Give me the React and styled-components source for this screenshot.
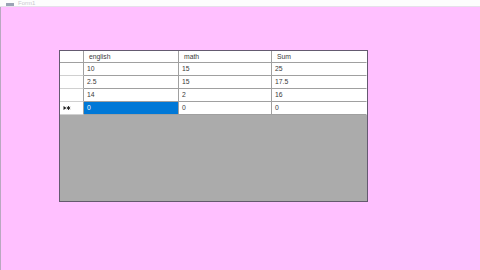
import React from "react";
import styled, { createGlobalStyle } from "styled-components";

const Global = createGlobalStyle`
  html, body { margin: 0; padding: 0; }
  body { width: 480px; height: 270px; overflow: hidden; background: #ffc0ff; font-family: "Liberation Sans", Arial, sans-serif; }
  #root { width: 480px; height: 270px; }
`;

const Window = styled.div`
  display: flex;
  flex-direction: column;
  width: 480px;
  height: 270px;
`;

const TitleBar = styled.div`
  height: 6px;
  flex: none;
  background: #fdfdfd;
  border-bottom: 1px solid #e6e0ea;
  display: flex;
  align-items: flex-end;
  padding-left: 6px;
  gap: 4px;
  overflow: hidden;
`;

const TitleIcon = styled.div`
  width: 8px;
  height: 3px;
  background: #9aa3b5;
`;

const TitleText = styled.div`
  font-size: 6px;
  line-height: 6px;
  color: #c8c8d0;
`;

const Client = styled.div`
  flex: 1;
  background: #ffc0ff;
  border-left: 1px solid #b9a8c0;
  padding: 43px 0 0 58px;
`;

const Grid = styled.div`
  width: 307px;
  height: 150px;
  border: 1px solid #645a70;
  background: #ababab;
  display: flex;
  flex-direction: column;
`;

const Row = styled.div`
  display: grid;
  grid-template-columns: 24px 95px 93px 1fr;
  height: ${(p) => (p.$header ? 12 : 13)}px;
`;

const Cell = styled.div`
  box-sizing: border-box;
  background: ${(p) => (p.$selected ? "#0078d7" : "#ffffff")};
  color: ${(p) => (p.$selected ? "#ffffff" : "#3a3a3a")};
  border-right: 1px solid ${(p) => (p.$last ? "#ffffff" : "#a0a0a0")};
  border-bottom: 1px solid #a0a0a0;
  font-size: 6.8px;
  line-height: 12px;
  padding-left: ${(p) => (p.$header ? 5 : 3)}px;
  white-space: nowrap;
  overflow: hidden;
`;

const RowHead = styled.div`
  box-sizing: border-box;
  background: #ffffff;
  border-right: 1px solid #a0a0a0;
  border-bottom: 1px solid ${(p) => (p.$header ? "#a0a0a0" : "#d0d0d0")};
  display: flex;
  align-items: center;
  padding-left: 3px;
`;

const Marker = () => (
  <svg width="8" height="6" viewBox="0 0 8 6">
    <path d="M0.5 1 L3.5 3 L0.5 5 Z" fill="#222" />
    <path d="M5.5 1 V5 M3.8 2 L7.2 4 M3.8 4 L7.2 2" stroke="#222" strokeWidth="0.9" />
  </svg>
);

const columns = ["english", "math", "Sum"];
const rows = [
  ["10", "15", "25"],
  ["2.5", "15", "17.5"],
  ["14", "2", "16"],
  ["0", "0", "0"],
];

export default function App() {
  return (
    <>
      <Global />
      <Window>
        <TitleBar>
          <TitleIcon />
          <TitleText>Form1</TitleText>
        </TitleBar>
        <Client>
          <Grid>
            <Row $header>
              <RowHead $header />
              {columns.map((c, i) => (
                <Cell key={c} $header $last={i === columns.length - 1}>
                  {c}
                </Cell>
              ))}
            </Row>
            {rows.map((r, ri) => (
              <Row key={ri}>
                <RowHead>{ri === rows.length - 1 && <Marker />}</RowHead>
                {r.map((v, ci) => (
                  <Cell
                    key={ci}
                    $selected={ri === rows.length - 1 && ci === 0}
                    $last={ci === r.length - 1}
                  >
                    {v}
                  </Cell>
                ))}
              </Row>
            ))}
          </Grid>
        </Client>
      </Window>
    </>
  );
}
